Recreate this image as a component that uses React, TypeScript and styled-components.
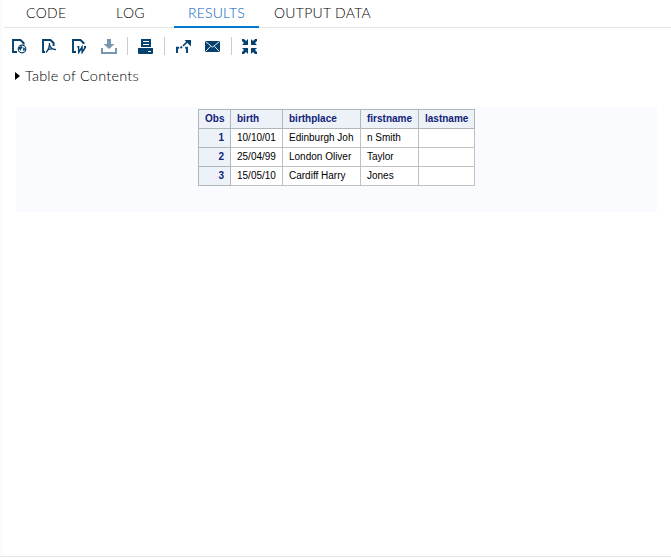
import React from "react";
import styled, { createGlobalStyle } from "styled-components";

const GlobalStyle = createGlobalStyle`
  * { box-sizing: border-box; }
  body { margin: 0; background: #fff; overflow: hidden; }
`;

const Page = styled.main`
  display: flex;
  flex-direction: column;
  height: 557px;
  border-bottom: 1px solid #e6e6e6;
  background: linear-gradient(90deg, #fafafa, #fff 4px);
  font-family: Lato, sans-serif;
  font-weight: 300;
  color: #000;
`;

const Tabs = styled.nav`
  display: flex;
  height: 28px;
  margin-left: 4px;
  box-shadow: inset 0 -1px #e5e6e7;
`;

const Tab = styled.button<{ $width: number; $indent: number; $spacing: number; $active?: boolean }>`
  width: ${(p) => p.$width}px;
  height: 28px;
  padding: 0 0 0 ${(p) => p.$indent}px;
  border: 0;
  border-bottom: 2px solid ${(p) => (p.$active ? "#0378cd" : "transparent")};
  background: none;
  color: ${(p) => (p.$active ? "#0060c0" : "#000")};
  font: 300 14px/26px Lato, sans-serif;
  letter-spacing: ${(p) => p.$spacing}px;
  text-align: left;
  white-space: nowrap;
`;

const Toolbar = styled.div`
  display: flex;
  align-items: center;
  height: 36px;
  padding-left: 11px;
`;

const Tool = styled.button<{ $gap: number; $muted?: boolean }>`
  display: block;
  width: 16px;
  height: 16px;
  margin-right: ${(p) => p.$gap}px;
  padding: 0;
  border: 0;
  background: none;
  color: ${(p) => (p.$muted ? "#7896b1" : "#04416f")};
  svg { display: block; }
`;

const Divider = styled.i<{ $gap: number }>`
  width: 1px;
  height: 18px;
  margin-right: ${(p) => p.$gap}px;
  background: #c9cbcd;
`;

const Contents = styled.div`
  display: flex;
  align-items: center;
  height: 24px;
  padding-left: 15px;
  font-size: 14.5px;
  line-height: 22px;
  letter-spacing: 0.22px;
  svg { margin-right: 5px; }
`;

const Results = styled.section`
  display: flex;
  justify-content: center;
  align-items: flex-start;
  width: 641px;
  height: 105px;
  margin: 19px 0 0 16px;
  padding-top: 2px;
  background: #fafbfe;
`;

const Table = styled.table`
  width: 277px;
  table-layout: fixed;
  border-collapse: separate;
  border-spacing: 0;
  border-top: 1px solid #b0b7bb;
  border-left: 1px solid #b0b7bb;
  font: 10px/12px "Liberation Sans", Arial, sans-serif;
  color: #000;
`;

const Header = styled.th<{ $right?: boolean }>`
  height: 19px;
  padding: 0 6px;
  border-right: 1px solid #b0b7bb;
  border-bottom: 1px solid #b0b7bb;
  background: #edf2f9;
  color: #112277;
  text-align: ${(p) => (p.$right ? "right" : "left")};
  white-space: nowrap;
`;

const Cell = styled.td`
  height: 19px;
  padding: 0 6px;
  border-right: 1px solid #c1c1c1;
  border-bottom: 1px solid #c1c1c1;
  background: #fff;
  white-space: nowrap;
`;

type IconName = "html" | "pdf" | "word" | "download" | "print" | "share" | "mail" | "collapse";

const drawings: Record<IconName, React.ReactNode> = {
  html: (
    <>
      <path d="M6 14H2V2h7.5L12.6 5V8" fill="none" stroke="currentColor" strokeWidth="1.9" />
      <circle cx="11" cy="11" r="4.8" fill="#fff" />
      <circle cx="11" cy="11" r="3.8" fill="none" stroke="currentColor" strokeWidth="1.2" />
      <path d="M8 9l3-1 .5 2-1.5 1v2L8 11zM12.5 9l1.7 2-1.4 2.6-.8-2z" fill="currentColor" />
    </>
  ),
  pdf: (
    <>
      <path d="M4 14H2V2h7.5L12.6 5V8" fill="none" stroke="currentColor" strokeWidth="1.9" />
      <path d="M8.5 5c.2 3-.5 6-3.5 9.5M8.5 7c1 3 2.6 4.6 6.5 4.7M6.5 12c2-1 5-1.5 8.3-.5" fill="none" stroke="currentColor" strokeWidth="1.3" />
    </>
  ),
  word: (
    <>
      <path d="M5 14H2V2h7.5L12.6 5V6" fill="none" stroke="currentColor" strokeWidth="1.9" />
      <path d="M6.3 8.7h2M7.6 9l.2 5.3L11 9l.2 5.3L14.5 9M13 8.7h2" fill="none" stroke="currentColor" strokeWidth="1.5" />
    </>
  ),
  download: (
    <path d="M6 1h4v5h3.5L8 11 2.5 6H6zM0 10h2v4h12v-4h2v6H0z" fill="currentColor" />
  ),
  print: (
    <>
      <path d="M3 1h10v8H3zM0 10h15v5q0 1-1 1H1q-1 0-1-1z" fill="currentColor" />
      <path d="M5 3.5h6M5 6.5h6M10 13.5h3" stroke="#fff" strokeWidth="1" />
    </>
  ),
  share: (
    <>
      <path d="M1 15v-5.2h2.2M9.2 9.7H11V15" fill="none" stroke="currentColor" strokeWidth="1.9" />
      <path d="M4.5 10.2l1.6-1.6M7 8l5-5" stroke="currentColor" strokeWidth="1.7" />
      <path d="M8.5 2H15v6.5z" fill="currentColor" />
    </>
  ),
  mail: (
    <>
      <rect x="0" y="3" width="15" height="11" rx="1" fill="currentColor" />
      <path d="M.7 3.7l6.8 5.5 6.8-5.5M.7 13.4l4.8-5M14.3 13.4l-4.8-5" fill="none" stroke="#fff" strokeWidth=".9" />
    </>
  ),
  collapse: (
    <path d="M0 1h2l2 2 2-2v6H0l2-2-2-2zM15 1h-2l-2 2-2-2v6h6l-2-2 2-2zM0 16h2l2-2 2 2v-6H0l2 2-2 2zM15 16h-2l-2-2-2 2v-6h6l-2 2 2 2z" fill="currentColor" />
  ),
};

const Action = ({ name, label, gap, muted }: { name: IconName; label: string; gap: number; muted?: boolean }) => (
  <Tool $gap={gap} $muted={muted} aria-label={label}>
    <svg width="16" height="16" viewBox="0 0 16 16">{drawings[name]}</svg>
  </Tool>
);

const rows = [
  ["10/10/01", "Edinburgh Joh", "n Smith", ""],
  ["25/04/99", "London Oliver", "Taylor", ""],
  ["15/05/10", "Cardiff Harry", "Jones", ""],
];

export default function App() {
  return (
    <>
      <GlobalStyle />
      <Page>
        <Tabs>
          <Tab $width={91} $indent={22} $spacing={0.35}>CODE</Tab>
          <Tab $width={79} $indent={21} $spacing={0.4}>LOG</Tab>
          <Tab $width={85} $indent={14} $spacing={0.2} $active>RESULTS</Tab>
          <Tab $width={130} $indent={15} $spacing={0.27}>OUTPUT DATA</Tab>
        </Tabs>
        <Toolbar>
          <Action name="html" label="Download HTML" gap={14} />
          <Action name="pdf" label="Download PDF" gap={14} />
          <Action name="word" label="Download RTF" gap={14} />
          <Action name="download" label="Download data" gap={10} muted />
          <Divider $gap={10} />
          <Action name="print" label="Print" gap={10} />
          <Divider $gap={11} />
          <Action name="share" label="Open in a new tab" gap={13} />
          <Action name="mail" label="Email" gap={10} />
          <Divider $gap={10} />
          <Action name="collapse" label="Exit full view" gap={0} />
        </Toolbar>
        <Contents>
          <svg width="5" height="8" viewBox="0 0 5 8"><path d="M0 0l5 4-5 4z" fill="#000" /></svg>
          <span>Table of Contents</span>
        </Contents>
        <Results>
          <Table>
            <colgroup>
              <col width="32" />
              <col width="52" />
              <col width="78" />
              <col width="58" />
              <col width="56" />
            </colgroup>
            <thead>
              <tr>
                <Header $right>Obs</Header>
                <Header>birth</Header>
                <Header>birthplace</Header>
                <Header>firstname</Header>
                <Header>lastname</Header>
              </tr>
            </thead>
            <tbody>
              {rows.map((row, index) => (
                <tr key={row[0]}>
                  <Header $right>{index + 1}</Header>
                  {row.map((value, column) => <Cell key={column}>{value}</Cell>)}
                </tr>
              ))}
            </tbody>
          </Table>
        </Results>
      </Page>
    </>
  );
}
